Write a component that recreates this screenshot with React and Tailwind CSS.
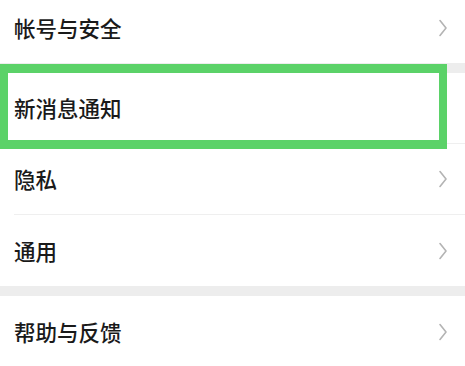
import React from 'react';

const Chevron = () => (
  <svg width="8" height="18" viewBox="0 0 8 18" fill="none" className="shrink-0">
    <polyline points="1,1.5 7,9 1,16.5" stroke="#b4b4b4" strokeWidth="1.6" strokeLinecap="round" strokeLinejoin="round" />
  </svg>
);

const Row = ({ label, divider = true, className = '' }) => (
  <div className={`h-[71px] bg-white pl-[14px] ${className}`}>
    <div
      className={`flex h-full items-center justify-between pr-[18px] ${
        divider ? 'border-b border-[#efefef]' : ''
      }`}
    >
      <span className="text-[21.5px] font-medium leading-none text-[#1a1a1a]">{label}</span>
      <Chevron />
    </div>
  </div>
);

const Gap = () => <div className="h-[10px] bg-[#ededed]" />;

export default function App() {
  return (
    <div
      className="h-[366px] w-[465px] overflow-hidden bg-white"
      style={{ fontFamily: '"Noto Sans CJK SC", "Noto Sans", sans-serif' }}
    >
      <Row label="帐号与安全" divider={false} className="-mt-[8px]" />
      <Gap />
      <div className="relative">
        <Row label="新消息通知" />
        {/* highlight frame */}
        <div className="pointer-events-none absolute -top-[9px] left-0 h-[85px] w-[447px] border-x-[8px] border-y-[9px] border-[#5bd268]" />
      </div>
      <Row label="隐私" />
      <Row label="通用" divider={false} />
      <Gap />
      <Row label="帮助与反馈" divider={false} />
    </div>
  );
}
